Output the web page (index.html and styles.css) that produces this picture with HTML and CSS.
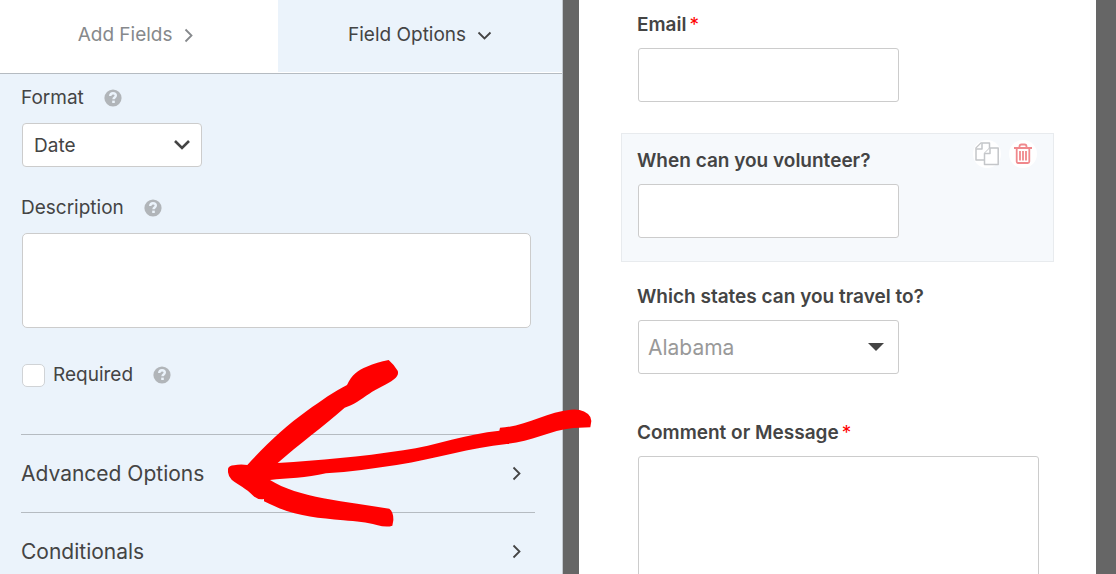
FILE: index.html
```html
<!DOCTYPE html>
<html lang="en">
<head>
    <meta charset="UTF-8">
    <meta name="viewport" content="width=device-width, initial-scale=1.0">
    <title>Form Builder</title>
    <link rel="stylesheet" href="styles.css">
</head>
<body>
<svg class="sprite" aria-hidden="true">
    <symbol id="help" viewBox="0 0 18 18">
        <circle cx="9" cy="9" r="8.6" fill="#b1b5b9"/>
        <path d="M6.2 7c.1-1.800 1.200-2.700 2.800-2.700s2.800.9 2.800 2.300c0 1.900-2.300 1.800-2.300 3.600" fill="none" stroke="#ebf3fb" stroke-width="2.400"/>
        <rect x="8.200" y="11.600" width="2.600" height="2.400" fill="#ebf3fb"/>
    </symbol>
    <symbol id="chevron-right" viewBox="0 0 9 15">
        <path d="M1.500 1.500l6 6-6 6" fill="none" stroke="currentColor" stroke-width="1.800"/>
    </symbol>
    <symbol id="chevron-down" viewBox="0 0 15 9">
        <path d="M1.500 1.500l6 6 6-6" fill="none" stroke="currentColor" stroke-width="1.800"/>
    </symbol>
</svg>
<div class="builder">
    <aside class="sidebar">
        <nav class="tabs">
            <a href="#add-fields" class="tab">Add Fields <svg width="9" height="15"><use href="#chevron-right"/></svg></a>
            <a href="#field-options" class="tab active">Field Options <svg width="15" height="9"><use href="#chevron-down"/></svg></a>
        </nav>
        <form class="options">
            <div class="option">
                <div class="option-label">
                    <label for="format">Format</label>
                    <svg class="help"><use href="#help"/></svg>
                </div>
                <div class="select format-select">
                    <select id="format" name="format">
                        <option>Date</option>
                    </select>
                    <svg width="18" height="12" viewBox="0 0 18 12"><path d="M2 2l7 7 7-7" fill="none" stroke="#444" stroke-width="2.600"/></svg>
                </div>
            </div>
            <div class="option">
                <div class="option-label">
                    <label for="description">Description</label>
                    <svg class="help"><use href="#help"/></svg>
                </div>
                <textarea id="description" name="description"></textarea>
            </div>
            <div class="option required-option">
                <input type="checkbox" id="required" name="required">
                <label for="required">Required</label>
                <svg class="help"><use href="#help"/></svg>
            </div>
            <div class="groups">
                <button type="button" class="group">Advanced Options <svg width="9" height="15"><use href="#chevron-right"/></svg></button>
                <button type="button" class="group">Conditionals <svg width="9" height="15"><use href="#chevron-right"/></svg></button>
            </div>
        </form>
    </aside>
    <main class="preview">
        <form class="sheet">
            <div class="field">
                <label for="email">Email<span class="asterisk">*</span></label>
                <input type="text" id="email" name="email">
            </div>
            <div class="field selected">
                <label for="volunteer">When can you volunteer?</label>
                <input type="text" id="volunteer" name="volunteer">
                <div class="actions">
                    <button type="button" aria-label="Duplicate field">
                        <svg width="24" height="24" viewBox="0 0 24 24" fill="#fff" stroke="#c4c6c9" stroke-width="1.500" stroke-linejoin="round">
                            <path d="M6 1h8.500v17H1V6z"/>
                            <path d="M7 1v6H1"/>
                            <path d="M15 6h8.200v16.500H9.500v-11z"/>
                            <path d="M15 6v5.500H9.500"/>
                        </svg>
                    </button>
                    <button type="button" aria-label="Delete field">
                        <svg width="18" height="22" viewBox="0 0 18 22" fill="none" stroke="#f0888c" stroke-width="1.800">
                            <path d="M0 5h18M5.500 5V3.500Q5.500 1.500 7.500 1.500h3Q12.500 1.500 12.500 3.500V5"/>
                            <path d="M2.700 5v13.500q0 1.500 1.500 1.500h9.600q1.500 0 1.500-1.500V5M6 8v9.500M9 8v9.500M12 8v9.500"/>
                        </svg>
                    </button>
                </div>
            </div>
            <div class="field">
                <label for="states">Which states can you travel to?</label>
                <div class="select states-select">
                    <select id="states" name="states">
                        <option>Alabama</option>
                    </select>
                    <svg width="16" height="8" viewBox="0 0 16 8"><path d="M0 0h16L8 8z" fill="#444"/></svg>
                </div>
            </div>
            <div class="field">
                <label for="comment">Comment or Message<span class="asterisk">*</span></label>
                <textarea id="comment" name="comment"></textarea>
            </div>
        </form>
    </main>
    <svg class="arrow" viewBox="54 59 1092 501" aria-hidden="true">
        <path fill="#f00" d="M112 374C170 310 230 255 290 212C335 180 370 155 411 134C425 103 445 88 470 79C492 70 512 64 536 59Q550 71 563 91Q568 105 552 117C532 133 500 145 478 160C452 177 430 194 404 202C340 258 265 313 203 368C330 360 450 350 580 330C680 315 770 280 868 271L870 262C940 260 1010 215 1082 208Q1125 204 1141 230L1144 242L1141 261L1090 263C1020 270 960 305 890 311C780 322 680 355 560 374C490 384 420 395 348 399C290 413 230 414 180 419C220 445 280 462 340 474C410 486 475 496 538 505Q551 515 550 540L547 556Q530 562 500 554C470 546 440 543 400 540C310 531 250 528 162 483V476Q144 480 128 465C110 444 85 435 65 418Q52 407 54 385Q57 376 72 375Q90 371 112 374Z"/>
    </svg>
</div>
</body>
</html>
```

FILE: styles.css
```css
* {
    box-sizing: border-box;
}
body {
    margin: 0;
    font-family: Inter, "Liberation Sans", sans-serif;
    font-size: 19px;
    line-height: 24px;
    color: #444;
}
input, select, textarea, button {
    font: inherit;
    color: inherit;
    margin: 0;
}
svg {
    display: block;
    flex: none;
}
.sprite {
    display: none;
}
.builder {
    position: relative;
    display: grid;
    grid-template-columns: 1.018fr 1fr;
    height: 100vh;
    overflow: hidden;
}

/* Left panel */
.sidebar {
    background: #ebf3fb;
    border-right: 1px solid #c3c9cf;
}
.tabs {
    display: flex;
    background: #fff;
    border-bottom: 1px solid #b5bbc1;
    padding-bottom: 1px;
}
.tab {
    flex: 0 0 49.5%;
    display: flex;
    align-items: center;
    justify-content: center;
    gap: 11px;
    padding: 23px 16px 25px 8px;
    color: #86898c;
    text-decoration: none;
}
.tab.active {
    flex: 1;
    padding-left: 16px;
    background: #ebf3fb;
    color: #444;
}
.options {
    padding: 12px 27px 0 21px;
}
.option {
    padding: 0 4px 0 1px;
    margin-bottom: 29px;
}
.option-label {
    display: flex;
    align-items: center;
    gap: 20px;
    margin: 0 0 13px -1px;
}
.help {
    width: 18px;
    height: 18px;
}
.select {
    position: relative;
}
.select select {
    display: block;
    width: 100%;
    appearance: none;
    background: #fff;
    border: 1px solid #ccc;
    border-radius: 4px;
}
.select svg {
    position: absolute;
    top: 50%;
    transform: translateY(-50%);
    pointer-events: none;
}
.format-select {
    width: 180px;
}
.format-select select {
    height: 44px;
    padding: 1px 11px 0;
}
.format-select svg {
    right: 11px;
}
.option textarea {
    display: block;
    width: 100%;
    height: 95px;
    resize: none;
    background: #fff;
    border: 1px solid #ccc;
    border-radius: 5px;
}
.required-option {
    display: flex;
    align-items: center;
    margin: 35px 0 47px;
}
.required-option input {
    appearance: none;
    width: 23px;
    height: 23px;
    margin-right: 8px;
    background: #fff;
    border: 1px solid #d0d3d6;
    border-radius: 5px;
}
.required-option .help {
    margin-left: 20px;
}
.group {
    display: flex;
    align-items: center;
    justify-content: space-between;
    width: 100%;
    height: 78px;
    padding: 0 14px 0 0;
    font-size: 21px;
    background: none;
    border: 0;
    border-top: 1px solid #b5bbc1;
    cursor: pointer;
}

/* Form preview */
.preview {
    background: #666;
    padding: 0 20px 0 16px;
}
.sheet {
    height: 100%;
    padding: 0 42px;
    background: #fff;
}
.field {
    position: relative;
    padding: 15px 15px 23px 15px;
    margin-bottom: 7px;
    border: 1px solid transparent;
}
.field:first-child {
    padding-top: 12px;
}
.field.selected {
    background: #f6f9fc;
    border-color: #e8ebee;
}
.field label {
    display: block;
    margin-bottom: 11px;
    font-weight: 600;
}
.asterisk {
    color: #f00;
    font-weight: 400;
    margin-left: 3px;
}
.field input, .states-select, .field textarea {
    display: block;
    margin-left: 1px;
}
.field input, .field textarea {
    background: #fff;
    border: 1px solid #ccc;
    border-radius: 3px;
}
.field input, .states-select {
    width: 65%;
    height: 54px;
}
.states-select select {
    height: 54px;
    padding: 2px 9px 0;
    font-size: 21px;
    color: #999;
    border-radius: 3px;
}
.states-select svg {
    right: 15px;
}
.field textarea {
    width: 100%;
    height: 240px;
    resize: none;
}
.actions {
    position: absolute;
    top: 6px;
    right: 16px;
    display: flex;
    gap: 8px;
}
.actions button {
    display: flex;
    align-items: center;
    justify-content: center;
    width: 28px;
    height: 28px;
    padding: 0;
    background: #fff;
    border: 0;
    border-radius: 50%;
    cursor: pointer;
}

/* Hand-drawn arrow over the panels */
.arrow {
    position: absolute;
    top: 360px;
    left: 228px;
    width: 364px;
    height: 167px;
    pointer-events: none;
}
```
